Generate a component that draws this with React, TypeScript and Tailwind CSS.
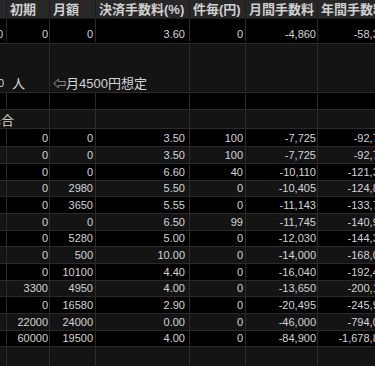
import React from 'react';

const font = { fontFamily: '"Liberation Sans", "Noto Sans CJK JP", sans-serif' };

// column widths: A is mostly scrolled off to the left
const colW = ['w-[40px]', 'w-[43px]', 'w-[46px]', 'w-[94px]', 'w-[56px]', 'w-[72px]', 'w-[76px]'];
const padR = ['pr-[3px]', 'pr-[1px]', 'pr-[2px]', 'pr-[4px]', 'pr-[2px]', 'pr-[1px]', 'pr-[2px]'];

const headers = ['', '初期', '月額', '決済手数料(%)', '件毎(円)', '月間手数料', '年間手数料'];

const rows = [
  ['0', '0', '3.50', '100', '-7,725', '-92,700'],
  ['0', '0', '3.50', '100', '-7,725', '-92,700'],
  ['0', '0', '6.60', '40', '-10,110', '-121,320'],
  ['0', '2980', '5.50', '0', '-10,405', '-124,860'],
  ['0', '3650', '5.55', '0', '-11,143', '-133,716'],
  ['0', '0', '6.50', '99', '-11,745', '-140,940'],
  ['0', '5280', '5.00', '0', '-12,030', '-144,360'],
  ['0', '500', '10.00', '0', '-14,000', '-168,000'],
  ['0', '10100', '4.40', '0', '-16,040', '-192,480'],
  ['3300', '4950', '4.00', '0', '-13,650', '-200,100'],
  ['0', '16580', '2.90', '0', '-20,495', '-245,940'],
  ['22000', '24000', '0.00', '0', '-46,000', '-794,000'],
  ['60000', '19500', '4.00', '0', '-84,900', '-1,678,800'],
];

const rowH = [
  'h-[18px]', 'h-[17px]', 'h-[17px]', 'h-[16px]', 'h-[17px]', 'h-[17px]', 'h-[16px]',
  'h-[17px]', 'h-[17px]', 'h-[16px]', 'h-[17px]', 'h-[17px]', 'h-[16px]',
];

const line = 'border-[#2b2b2b]';

const Cell: React.FC<{ i: number; children?: React.ReactNode; noBorder?: boolean }> = ({ i, children, noBorder }) => (
  <div
    className={`${colW[i]} shrink-0 flex items-end justify-end overflow-hidden whitespace-nowrap text-[11px] ${padR[i]} ${
      noBorder ? '' : `border-r ${line}`
    }`}
  >
    {children}
  </div>
);

const App: React.FC = () => {
  return (
    <div className="w-[375px] h-[366px] overflow-hidden bg-black text-[13px] leading-[15px] text-[#d4d4d4]" style={font}>
      <div className="ml-[-33px] w-[427px]">
        {/* header */}
        <div className="flex h-[19px] bg-[#272727] border-b border-[#1c1c1c]">
          {headers.map((h, i) => (
            <div
              key={i}
              className={`${colW[i]} shrink-0 flex items-center pl-[3px] font-bold text-[#cfcfcf] whitespace-nowrap overflow-hidden border-r border-[#1c1c1c]`}
            >
              {h}
            </div>
          ))}
        </div>

        {/* summary row */}
        <div className={`flex h-[25px] bg-black border-b ${line} pb-[1px]`}>
          <Cell i={0}>0</Cell>
          <Cell i={1}>0</Cell>
          <Cell i={2}>0</Cell>
          <Cell i={3}>3.60</Cell>
          <Cell i={4}>0</Cell>
          <Cell i={5}>-4,860</Cell>
          <Cell i={6}>-58,320</Cell>
        </div>

        {/* people row */}
        <div className={`flex h-[49px] bg-[#141414] border-b ${line} pb-[1px]`}>
          <Cell i={0} noBorder>0</Cell>
          <div className={`${colW[1]} shrink-0 flex items-end pl-[5px] border-r ${line}`}>人</div>
          <div className={`w-[140px] shrink-0 flex items-end pl-[3px] whitespace-nowrap border-r ${line}`}>
            ⇦月4500円想定
          </div>
          <Cell i={4} />
          <Cell i={5} />
          <Cell i={6} />
        </div>

        {/* blank row */}
        <div className={`flex h-[17px] bg-black border-b ${line}`}>
          {colW.map((_, i) => (
            <Cell key={i} i={i} />
          ))}
        </div>

        {/* section label */}
        <div className={`flex h-[19px] bg-[#141414] border-b ${line}`}>
          <div className={`w-[83px] shrink-0 flex items-end pl-[21px] whitespace-nowrap overflow-hidden border-r ${line}`}>
            場合
          </div>
          {[2, 3, 4, 5, 6].map((i) => (
            <Cell key={i} i={i} />
          ))}
        </div>

        {/* plans */}
        {rows.map((r, ri) => (
          <div
            key={ri}
            className={`flex ${rowH[ri]} ${ri % 2 === 0 ? 'bg-black' : 'bg-[#141414]'} border-b ${line}`}
          >
            <Cell i={0} />
            {r.map((v, ci) => (
              <Cell key={ci} i={ci + 1}>
                {v}
              </Cell>
            ))}
          </div>
        ))}

        {/* trailing empty row */}
        <div className={`flex h-[24px] bg-[#141414] border-b ${line}`}>
          {colW.map((_, i) => (
            <Cell key={i} i={i} />
          ))}
        </div>
      </div>
    </div>
  );
};

export default App;
